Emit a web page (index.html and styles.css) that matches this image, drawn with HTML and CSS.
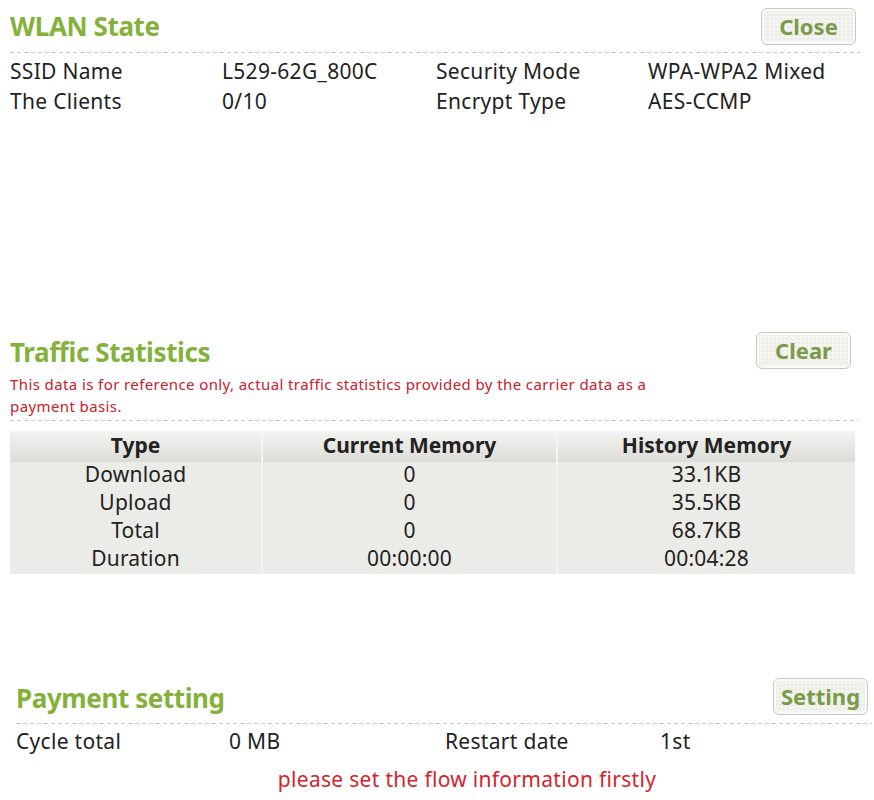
FILE: index.html
```html
<!DOCTYPE html>
<html>
<head>
<meta charset="utf-8">
<link rel="stylesheet" href="styles.css">
</head>
<body>
<section class="sec wlan">
  <div class="head dashed">
    <h2 class="title">WLAN State</h2>
    <button class="btn">Close</button>
  </div>
  <div class="info">
    <span>SSID Name</span><span>L529-62G_800C</span><span>Security Mode</span><span>WPA-WPA2 Mixed</span>
    <span>The Clients</span><span>0/10</span><span>Encrypt Type</span><span>AES-CCMP</span>
  </div>
</section>

<section class="sec traffic">
  <div class="dashed traffic-head">
    <div class="head">
      <h2 class="title">Traffic Statistics</h2>
      <button class="btn">Clear</button>
    </div>
    <p class="note">This data is for reference only, actual traffic statistics provided by the carrier data as a<br>payment basis.</p>
  </div>
  <table class="stats">
    <thead>
      <tr><th class="c1">Type</th><th class="c2">Current Memory</th><th class="c3">History Memory</th></tr>
    </thead>
    <tbody>
      <tr><td>Download</td><td>0</td><td>33.1KB</td></tr>
      <tr><td>Upload</td><td>0</td><td>35.5KB</td></tr>
      <tr><td>Total</td><td>0</td><td>68.7KB</td></tr>
      <tr><td>Duration</td><td>00:00:00</td><td>00:04:28</td></tr>
    </tbody>
  </table>
</section>

<section class="sec payment">
  <div class="head dashed">
    <h2 class="title">Payment setting</h2>
    <button class="btn">Setting</button>
  </div>
  <div class="info pay-info">
    <span>Cycle total</span><span>0 MB</span><span>Restart date</span><span>1st</span>
  </div>
  <p class="warn">please set the flow information firstly</p>
</section>
</body>
</html>
```
FILE: styles.css
```css
* { box-sizing: border-box; }
body {
  margin: 0;
  font-family: "Noto Sans", "Open Sans", sans-serif;
  color: #222;
  background: #fff;
  font-size: 21px;
  letter-spacing: 0.3px;
}
.sec { display: block; }
.wlan { margin: 0 14px 0 10px; height: 330px; }
.traffic { margin: 0 16px 0 10px; height: 346px; }
.payment { margin: 0 2px 0 16px; }

.head {
  display: flex;
  justify-content: space-between;
  align-items: center;
}
.wlan .head { height: 53px; padding-bottom: 1px; }
.payment .head { height: 48px; padding-bottom: 8px; }

.dashed {
  background-image: repeating-linear-gradient(to right, #c9c9c9 0 4px, transparent 4px 7px);
  background-size: 100% 1px;
  background-repeat: no-repeat;
  background-position: left bottom;
}
.title {
  margin: 0;
  font-size: 26px;
  font-weight: bold;
  color: #84b13a;
  letter-spacing: -0.4px;
}
.btn {
  font-family: inherit;
  font-size: 22px;
  font-weight: bold;
  letter-spacing: 0;
  color: #7a9b48;
  width: 95px;
  height: 37px;
  padding: 0;
  border: 1px solid #c8c8c4;
  border-radius: 6px;
  background-color: #f3f3ef;
  background-image: radial-gradient(circle, #dcdcd6 0.6px, transparent 0.8px);
  background-size: 4px 4px;
  box-shadow: inset 0 0 0 2px #fafaf8;
  margin-right: 4px;
}
.info {
  display: grid;
  grid-template-columns: 212px 214px 212px auto;
  grid-auto-rows: 30px;
  align-items: center;
  padding-top: 3px;
  line-height: 30px;
}
.traffic-head { padding-bottom: 4px; }
.traffic .head { height: 40px; }
.traffic .head .btn { margin-right: 7px; }
.traffic .head .title { position: relative; top: 2px; }
.note {
  margin: 3px 0 0;
  color: #c8202c;
  font-size: 15px;
  letter-spacing: 0.4px;
  line-height: 22px;
  white-space: nowrap;
}
.stats {
  margin-top: 10px;
  width: 845px;
  border-collapse: collapse;
  background: #ebebe7;
  text-align: center;
  letter-spacing: 0;
}
.stats th {
  height: 31px;
  padding: 0;
  font-weight: bold;
  font-size: 21px;
  line-height: 28px;
  vertical-align: top;
  background: linear-gradient(#f3f3f1, #dcdcd7);
}
.stats td {
  height: 28px;
  padding: 0;
  line-height: 24px;
  vertical-align: top;
  letter-spacing: 0.2px;
}
.stats th + th, .stats td + td { border-left: 2px solid #f4f4f1; }
.c1 { width: 252px; }
.c2 { width: 295px; }
.c3 { width: 298px; }
.pay-info {
  grid-template-columns: 213px 216px 215px auto;
  padding-top: 2px;
}
.warn {
  margin: 8px 0 0;
  color: #d3242b;
  text-align: center;
  line-height: 30px;
  padding-left: 46px;
}
.payment .head .title { position: relative; top: 2px; }
```
